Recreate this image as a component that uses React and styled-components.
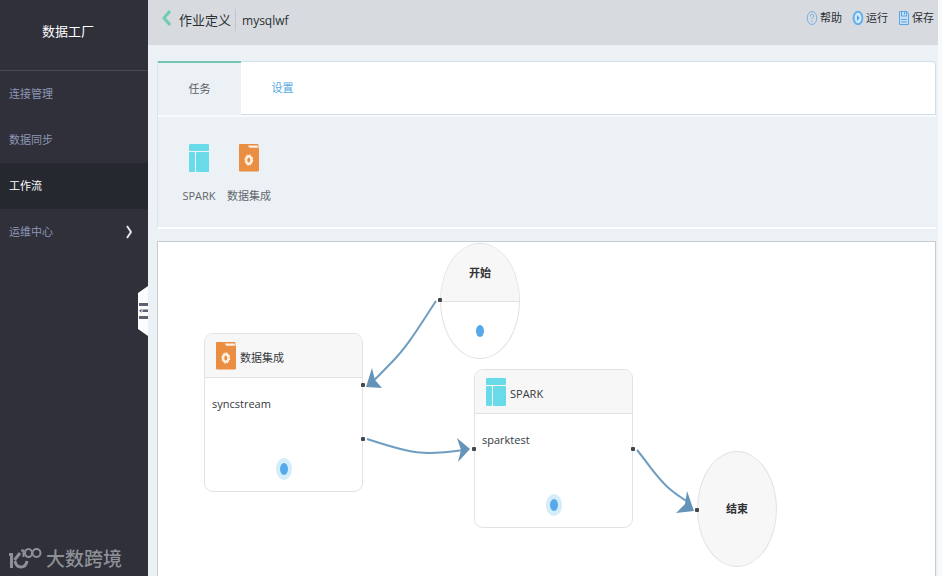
import React from "react";
import styled, { createGlobalStyle } from "styled-components";

const MENU = [
  { name: "连接管理" },
  { name: "数据同步" },
  { name: "工作流", active: true },
  { name: "运维中心", more: true },
];

const SparkIcon = () => (
  <svg width="20" height="28" viewBox="0 0 20 28" fill="#68dae8" aria-hidden="true">
    <rect width="20" height="7" rx="1" />
    <rect y="8" width="6" height="20" rx="1" />
    <rect x="7" y="8" width="13" height="20" rx="1" />
  </svg>
);

const FolderIcon = () => (
  <svg width="20" height="28" viewBox="0 0 20 28" aria-hidden="true">
    <path d="M0 1Q0 0 1 0H7.500L9 4H19Q20 4 20 5V26.500Q20 27.500 19 27.500H1Q0 27.500 0 26.500Z" fill="#ea8e42" />
    <path d="M7 0H18.500Q19.500 0 19.500 1V5H9Z" fill="#ea8e42" />
    <path d="M8.800 1.500H18.800V3.800H10.500Z" fill="#fdf0e4" />
    <ellipse cx="9.800" cy="16" rx="2.700" ry="3.800" fill="none" stroke="#fff1e2" strokeWidth="2.400" />
    <ellipse cx="9.800" cy="16" rx="3.900" ry="5.300" fill="none" stroke="#fff1e2" strokeWidth="1" strokeDasharray="2 1.600" />
  </svg>
);

const HelpIcon = () => (
  <svg width="12" height="16" viewBox="0 0 12 16" fill="none" stroke="#78afe2" aria-hidden="true">
    <ellipse cx="6" cy="8" rx="4.800" ry="6.500" />
    <path d="M4.300 6.500C4.300 3.500 7.800 3.700 7.800 6C7.800 7.800 6 7.500 6 9.500M6 10.800V12" />
  </svg>
);

const RunIcon = () => (
  <svg width="12" height="16" viewBox="0 0 12 16" aria-hidden="true">
    <ellipse cx="6" cy="8" rx="4.400" ry="6.200" fill="#d5eafa" stroke="#68b0ec" strokeWidth="2" />
    <path d="M5 5L7.500 8L5 11Z" fill="#459bea" />
  </svg>
);

const SaveIcon = () => (
  <svg width="12" height="16" viewBox="0 0 12 16" fill="none" stroke="#5ba4e4" aria-hidden="true">
    <path d="M1.500 1.500H9L10.500 3.500V14.500H1.500Z" fill="#c6e0f6" />
    <path d="M3.500 1.500V6H8.500V1.500M6.500 2V4.500M3 9.500H9M3 12H9" />
  </svg>
);

const Links = () => (
  <LinkLayer aria-hidden="true">
    <g fill="none" stroke="#6e9dc2" strokeWidth="2">
      <path d="M278 59C262 83 250 104 234 120C227 127 222 133 213 141" />
      <path d="M209 197C240 207 255 211 271 211C284 211 292 210 306 208" />
      <path d="M479 208C490 221 500 238 513 248C519 253 522 255 530 260" />
    </g>
    <g fill="#6694b8">
      <path d="M208 145L214 126L217 138L224 146Z" />
      <path d="M312 207L299 196L303 208L300 220Z" />
      <path d="M536 269L529 249L527 262L518 271Z" />
    </g>
  </LinkLayer>
);

const App = () => {
  return (
    <>
      <GlobalStyle />
      <Page>
        <Sidebar>
          <Brand>数据工厂</Brand>
          <nav>
            {MENU.map((el) => (
              <MenuLink key={el.name} href="#" $active={el.active}>
                {el.name}
                {el.more && (
                  <svg width="6" height="14" viewBox="0 0 6 14" fill="none" stroke="#e4e6ea" strokeWidth="2" aria-hidden="true">
                    <path d="M1 1L5 7L1 13" />
                  </svg>
                )}
              </MenuLink>
            ))}
          </nav>
          <Watermark>
            <svg width="34" height="24" viewBox="0 0 34 24" fill="none" stroke="#8d9097" aria-hidden="true">
              <path d="M1 7.500H3.500V21" strokeWidth="3" />
              <path d="M12 6L6.500 13" strokeWidth="3" />
              <path d="M7 14Q8 20 13 20Q18 20 19 14" strokeWidth="3" />
              <path d="M13 3.500H15.500V10" strokeWidth="2" />
              <ellipse cx="20.500" cy="6" rx="3.500" ry="4" strokeWidth="2" />
              <ellipse cx="28.500" cy="6" rx="4" ry="4" strokeWidth="2" />
            </svg>
            大数跨境
          </Watermark>
          <Handle type="button" aria-label="menu">
            <svg width="10" height="50" viewBox="0 0 10 50" aria-hidden="true">
              <path d="M10 0L0 7V43L10 50Z" fill="#fbfcfd" />
              <path d="M1 17H10V20H1ZM4.500 23.500H10V26H4.500ZM1 24.700L3.500 22.800V26.700ZM1 30H10V33H1Z" fill="#5d6170" />
            </svg>
          </Handle>
        </Sidebar>

        <Main>
          <Header>
            <Back type="button" aria-label="back">
              <svg width="9" height="16" viewBox="0 0 9 16" fill="none" stroke="#70cdb0" strokeWidth="3" aria-hidden="true">
                <path d="M8 1L2 8L8 15" />
              </svg>
            </Back>
            <Title>作业定义</Title>
            <JobName>mysqlwf</JobName>
            <Actions>
              <Action type="button"><HelpIcon />帮助</Action>
              <Action type="button"><RunIcon />运行</Action>
              <Action type="button"><SaveIcon />保存</Action>
            </Actions>
          </Header>

          <Content>
            <Panel>
              <Tabs>
                <Tab type="button" $active>任务</Tab>
                <Tab type="button">设置</Tab>
              </Tabs>
              <Tools>
                <Tool type="button"><SparkIcon />SPARK</Tool>
                <Tool type="button"><FolderIcon />数据集成</Tool>
              </Tools>
            </Panel>

            <Canvas>
              <Round $x={282} $y={1}>
                <RoundHead>开始</RoundHead>
                <Dot />
              </Round>
              <Node $x={46} $y={91}>
                <NodeHead><FolderIcon /><NodeType>数据集成</NodeType></NodeHead>
                <NodeName>syncstream</NodeName>
                <Dot $halo />
              </Node>
              <Node $x={316} $y={127}>
                <NodeHead><SparkIcon /><NodeType>SPARK</NodeType></NodeHead>
                <NodeName>sparktest</NodeName>
                <Dot $halo />
              </Node>
              <Round $x={539} $y={209} $end>结束</Round>
              <Links />
              <Port $x={280} $y={56} />
              <Port $x={203} $y={141} />
              <Port $x={203} $y={195} />
              <Port $x={314} $y={205} />
              <Port $x={473} $y={205} />
              <Port $x={537} $y={266} />
            </Canvas>
          </Content>
        </Main>
      </Page>
    </>
  );
};

// 全局样式
const GlobalStyle = createGlobalStyle`
  * {
    box-sizing: border-box;
  }
  body {
    margin: 0;
    background: #f6fafc;
    color: #36393e;
    font-family: "Open Sans", "Noto Sans CJK SC", sans-serif;
    font-size: 11px;
    line-height: 16px;
  }
  button {
    padding: 0;
    border: none;
    background: none;
    color: inherit;
    font: inherit;
    cursor: pointer;
  }
  svg {
    display: block;
    flex: none;
  }
`;

const Page = styled.div`
  display: flex;
  height: 100vh;
  min-height: 576px;
  padding-right: 4px;
`;

// 左侧菜单
const Sidebar = styled.aside`
  position: relative;
  display: flex;
  flex-direction: column;
  flex: none;
  width: 148px;
  background: #2f3039;
`;

const Brand = styled.div`
  height: 71px;
  padding: 20px 12px 0 0;
  border-bottom: 1px solid #474a54;
  color: #ffffff;
  font-size: 13px;
  line-height: 22px;
  text-align: center;
`;

const MenuLink = styled.a`
  display: flex;
  align-items: center;
  justify-content: space-between;
  height: 46px;
  padding: 0 16px 0 9px;
  background: ${(props) => (props.$active ? "#262830" : "none")};
  color: ${(props) => (props.$active ? "#ffffff" : "#8e96b4")};
  text-decoration: none;
`;

const Watermark = styled.div`
  display: flex;
  align-items: center;
  gap: 4px;
  margin-top: auto;
  padding: 0 0 5px 8px;
  color: #8d9097;
  font-size: 19px;
  font-weight: 500;
  line-height: 24px;
`;

const Handle = styled.button`
  position: absolute;
  top: 286px;
  right: 0;
`;

// 右侧内容
const Main = styled.main`
  display: flex;
  flex: 1;
  flex-direction: column;
  min-width: 0;
  background: #ebf1f5;
`;

const Header = styled.header`
  display: flex;
  align-items: center;
  height: 45px;
  padding: 0 4px 6px 14px;
  background: #d7dbe0;
  color: #2c2f33;
`;

const Back = styled.button`
  margin: 0 8px 4px 0;
`;

const Title = styled.h1`
  margin: 0;
  padding-right: 4px;
  border-right: 1px solid #c3c7cb;
  font-size: 13px;
  font-weight: 400;
  line-height: 22px;
`;

const JobName = styled.span`
  padding: 2px 0 0 6px;
  font-size: 12px;
`;

const Actions = styled.div`
  display: flex;
  gap: 10px;
  margin-left: auto;
  padding-bottom: 4px;
`;

const Action = styled.button`
  display: flex;
  align-items: center;
  gap: 2px;
`;

const Content = styled.div`
  display: flex;
  flex: 1;
  flex-direction: column;
  gap: 12px;
  padding: 16px 2px 0 9px;
`;

const Panel = styled.section`
  border-left: 1px solid #dbe4ea;
  border-bottom: 2px solid #fbfdfe;
`;

const Tabs = styled.div`
  display: flex;
  height: 54px;
  border: solid #cfe0ea;
  border-width: 1px 1px 1px 0;
  border-radius: 0 4px 0 0;
  background: #ffffff;
`;

const Tab = styled.button`
  width: 83px;
  margin: ${(props) => (props.$active ? "-1px 0" : "0")};
  border-top: ${(props) => (props.$active ? "2px solid #74c5b1" : "none")};
  background: ${(props) => (props.$active ? "#ebf1f5" : "none")};
  color: ${(props) => (props.$active ? "#5a5e63" : "#53a9e4")};
`;

const Tools = styled.div`
  display: flex;
  height: 112px;
  padding: 27px 16px;
  border-top: 2px solid #f8fbfc;
`;

const Tool = styled.button`
  display: flex;
  flex-direction: column;
  align-items: center;
  gap: 16px;
  width: 50px;
  color: #626669;
  white-space: nowrap;
`;

// 流程画布
const Canvas = styled.section`
  position: relative;
  flex: 1;
  overflow: hidden;
  border: 1px solid #c9cccf;
  border-bottom: none;
  background: #ffffff;
`;

const Node = styled.div`
  position: absolute;
  left: ${(props) => props.$x}px;
  top: ${(props) => props.$y}px;
  display: flex;
  flex-direction: column;
  width: 159px;
  height: 159px;
  padding-bottom: 11px;
  overflow: hidden;
  border: 1px solid #e2e2e2;
  border-radius: 9px;
  background: #ffffff;
`;

const NodeHead = styled.div`
  display: flex;
  align-items: center;
  gap: 4px;
  height: 44px;
  padding: 0 11px;
  border-bottom: 1px solid #e2e2e2;
  background: #f7f7f7;
`;

const NodeType = styled.span`
  padding-top: 5px;
`;

const NodeName = styled.div`
  padding: 18px 7px;
`;

const Round = styled.div`
  position: absolute;
  left: ${(props) => props.$x}px;
  top: ${(props) => props.$y}px;
  display: flex;
  flex-direction: column;
  justify-content: ${(props) => (props.$end ? "center" : "flex-start")};
  width: 80px;
  height: 116px;
  overflow: hidden;
  border: 1px solid #e2e2e2;
  border-radius: 50%;
  background: ${(props) => (props.$end ? "#f7f7f7" : "#ffffff")};
  color: #303236;
  font-weight: 700;
  text-align: center;
`;

const RoundHead = styled.div`
  height: 58px;
  margin-bottom: 23px;
  padding-top: 21px;
  border-bottom: 1px solid #e2e2e2;
  background: #f7f7f7;
`;

const Dot = styled.i`
  width: ${(props) => (props.$halo ? "16px" : "8px")};
  height: ${(props) => (props.$halo ? "22px" : "12px")};
  margin: ${(props) => (props.$halo ? "auto auto 0" : "0 auto")};
  border: ${(props) => (props.$halo ? "solid #d5ecfb" : "none")};
  border-width: ${(props) => (props.$halo ? "5px 4px" : "0")};
  border-radius: 50%;
  background: #55a9ea;
`;

const Port = styled.i`
  position: absolute;
  left: ${(props) => props.$x}px;
  top: ${(props) => props.$y}px;
  width: 4px;
  height: 4px;
  border-radius: 1px;
  background: #44474c;
`;

const LinkLayer = styled.svg`
  position: absolute;
  left: 0;
  top: 0;
  width: 100%;
  height: 100%;
  pointer-events: none;
`;

export default App;
